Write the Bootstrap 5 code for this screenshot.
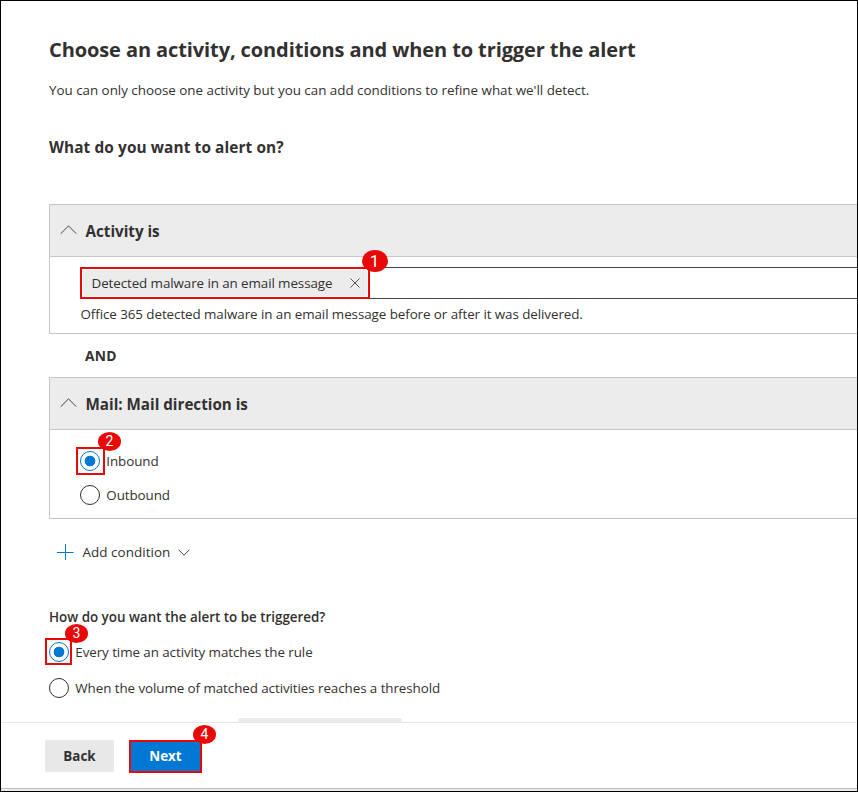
<!DOCTYPE html>
<html lang="en">
<head>
<meta charset="utf-8">
<meta name="viewport" content="width=device-width, initial-scale=1">
<title>Alert policy</title>
<link href="https://cdn.jsdelivr.net/npm/bootstrap@5.3.0/dist/css/bootstrap.min.css" rel="stylesheet">
<style>
body{font-family:"Open Sans","Noto Sans",sans-serif;font-size:13.4px;line-height:20px;color:#323130;background:#fff}
.wizard{height:792px;border:1px solid #000}
.pane{padding:29px 0 0 48px;white-space:nowrap}
.wizard h1{font-size:20px;line-height:40px;font-weight:700;letter-spacing:-.1px}
.wizard h2{font-size:15.4px;line-height:20px;font-weight:700;margin:38px 0 46px;letter-spacing:.1px}
.intro{margin-top:10px;letter-spacing:-.02px}
.rule-panel{border:1px solid #c8c6c4;border-right:0;height:130px}
.rule-panel-tall{height:142px}
.rule-head{height:52px;background:#ececec;border-bottom:1px solid #c8c6c4;padding-left:10px;font-size:15.2px;font-weight:700}
.rule-head svg{margin:-2px 8.500px 0 0}
.rule-body{padding-left:30px}
.picker{height:32px;border:1px solid #444;border-width:1px 0 1px 1px;margin-top:10px}
.chip{width:290px;height:32px;margin:-1px 0 0 -1px;border:2px solid #e80808;padding:1px}
.chip-fill{background:#ececec;border-radius:2px;padding:0 7px 0 8.500px;height:26px;letter-spacing:-.09px}
.desc{margin-top:5px;padding-left:.5px;letter-spacing:-.075px}
.num{position:absolute;background:#e80808;color:#fff;border-radius:50%;width:23px;height:19px;font:14px/19px Roboto,sans-serif;text-align:center;z-index:2}
.num-1{left:279.500px;top:-19px;width:26px;height:22px;font-size:17px;line-height:22px}
.num-2{left:18px;top:-19px}
.num-3{left:16px;top:-18px}
.num-4{left:64px;top:-15px}
.joiner{height:43px;padding-left:36px;font-size:13.8px;letter-spacing:.2px}
.option{height:20px;letter-spacing:-.075px}
.option .form-check-input{width:20px;height:20px;margin:0;border:1px solid #323130;background:#fff;flex:none;box-shadow:none}
.option .form-check-input:checked{border-color:#0078d4;background:radial-gradient(circle,#0078d4 5px,#fff 5.7px)}
.option label{margin-left:6.300px}
.opt-in{margin-top:21px}
.opt-out{margin-top:14px}
.ring{position:absolute;border:2px solid #e80808;left:-4px;top:-4px;width:29px;height:28px}
.ring-b{width:27px;height:27px}
.add{margin-top:21px;height:24px;padding-left:8px}
.add span{margin:0 8px 0 8.500px;letter-spacing:.06px}
.plus-icon{stroke:#0078d4;stroke-width:1px}
.question{margin:43px 0 15px;font-weight:600}
.stub{width:164px;height:4px;background:#ececec;border-radius:2px 2px 0 0;margin:20px 0 0 189px}
.actions{border-top:1px solid #e6e6e6;height:66px;padding:17px 0 0 44px}
.actions .btn{font-size:13.4px;line-height:20px;font-weight:700;border-radius:2px}
.actions .btn-back{width:69px;height:32px;padding:0;background:#e8e8e8;color:#323130}
.next-wrap{margin-left:15px}
.actions .btn-next{width:73px;height:33px;padding:0 0 2px;background:#0078d4;color:#fff;border:2px solid #e80808;border-radius:0}
.bottom-edge{height:3px;background:#ececec;border-top:1px solid #bebebe}
</style>
<script src="https://cdn.jsdelivr.net/npm/bootstrap@5.3.0/dist/js/bootstrap.bundle.min.js"></script>
</head>
<body>
<div class="wizard overflow-hidden d-flex flex-column">
  <main class="pane">
    <h1 class="mb-0">Choose an activity, conditions and when to trigger the alert</h1>
    <p class="intro mb-0">You can only choose one activity but you can add conditions to refine what we'll detect.</p>
    <h2>What do you want to alert on?</h2>

    <section class="rule-panel">
      <div class="rule-head d-flex align-items-center">
        <svg width="17" height="10" viewBox="0 0 17 10" fill="none" stroke="#444" stroke-width="1"><path d="M.7 8.700 8.500.9l7.800 7.800"/></svg>
        <span>Activity is</span>
      </div>
      <div class="rule-body">
        <div class="picker">
          <div class="chip position-relative">
            <div class="chip-fill d-flex align-items-center">
              <span>Detected malware in an email message</span>
              <svg class="ms-auto" width="10" height="10" viewBox="0 0 10 10" stroke="#555" stroke-width="1"><path d="m.5.500 9 9m0-9-9 9"/></svg>
            </div>
            <span class="num num-1">1</span>
          </div>
        </div>
        <div class="desc">Office 365 detected malware in an email message before or after it was delivered.</div>
      </div>
    </section>

    <div class="joiner fw-bold d-flex align-items-center">AND</div>

    <section class="rule-panel rule-panel-tall">
      <div class="rule-head d-flex align-items-center">
        <svg width="17" height="10" viewBox="0 0 17 10" fill="none" stroke="#444" stroke-width="1"><path d="M.7 8.700 8.500.9l7.800 7.800"/></svg>
        <span>Mail: Mail direction is</span>
      </div>
      <div class="rule-body">
        <div class="option opt-in d-flex align-items-center position-relative">
          <input class="form-check-input" type="radio" name="direction" id="inbound" checked><label for="inbound">Inbound</label>
          <span class="ring"></span><span class="num num-2">2</span>
        </div>
        <div class="option opt-out d-flex align-items-center">
          <input class="form-check-input" type="radio" name="direction" id="outbound"><label for="outbound">Outbound</label>
        </div>
      </div>
    </section>

    <div class="add d-flex align-items-center">
      <svg class="plus-icon" width="17" height="16" viewBox="0 0 17 16"><path d="M0 8.500h16.500M8.500 0v16"/></svg>
      <span>Add condition</span>
      <svg width="12" height="7" viewBox="0 0 12 7" fill="none" stroke="#444" stroke-width="1"><path d="m.5.700 5.500 5.500L11.500.700"/></svg>
    </div>

    <div class="question">How do you want the alert to be triggered?</div>
    <div class="option d-flex align-items-center position-relative">
      <input class="form-check-input" type="radio" name="trigger" id="every" checked><label for="every">Every time an activity matches the rule</label>
      <span class="ring ring-b"></span><span class="num num-3">3</span>
    </div>
    <div class="option d-flex align-items-center mt-3">
      <input class="form-check-input" type="radio" name="trigger" id="volume"><label for="volume">When the volume of matched activities reaches a threshold</label>
    </div>
    <div class="stub"></div>
  </main>
  <footer class="actions d-flex align-items-start">
    <button class="btn btn-back border-0" type="button">Back</button>
    <div class="next-wrap position-relative">
      <button class="btn btn-next" type="button">Next</button>
      <span class="num num-4">4</span>
    </div>
  </footer>
  <div class="bottom-edge"></div>
</div>
</body>
</html>
